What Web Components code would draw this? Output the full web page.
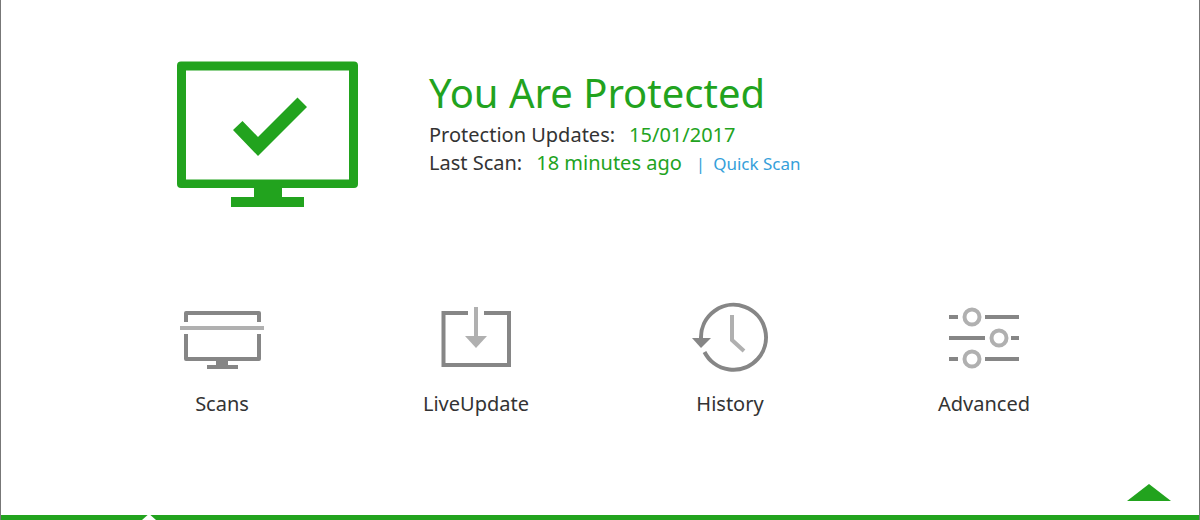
<!DOCTYPE html>
<html lang="en">
<head>
<meta charset="utf-8">
<title>Protection status</title>
<style>
  body {
    margin: 0;
    background: #fff;
    color: #333;
    font-family: "Noto Sans", "Open Sans", sans-serif;
    --green: #22a31e;
    --blue: #35a0da;
    --dark: #868686;
    --light: #b0b0b0;
  }
</style>
</head>
<body>
<security-app>
  <protection-status data-title="You Are Protected">
    <status-line data-label="Protection Updates:" data-value="15/01/2017"></status-line>
    <status-line data-label="Last Scan:" data-value="18 minutes ago">
      <a href="#quick-scan">Quick Scan</a>
    </status-line>
  </protection-status>
  <tile-bar>
    <nav-tile data-icon="scans" data-url="#scans">Scans</nav-tile>
    <nav-tile data-icon="update" data-url="#update">LiveUpdate</nav-tile>
    <nav-tile data-icon="history" data-url="#history">History</nav-tile>
    <nav-tile data-icon="advanced" data-url="#advanced">Advanced</nav-tile>
  </tile-bar>
  <drawer-bar slot="footer"></drawer-bar>
</security-app>

<script>
const ICONS = {
  scans: `
    <path class="dark" stroke-linejoin="round" d="M8 20V11H81V20" />
    <path class="dark" stroke-linejoin="round" d="M8 32V57H81V32" />
    <path class="light" d="M2 26H86" />
    <path class="dark-fill" d="M38 58H50V63H60V67H29V63H38Z" />`,
  update: `
    <path class="dark" d="M36 11H11.5V63H77V11H52" />
    <path class="light" d="M44 5V35" />
    <path class="light-fill" d="M33 34H55L44 46Z" />`,
  history: `
    <path class="dark" d="M15 36A32.5 32.5 0 1 1 18.500 50" />
    <path class="dark-fill" d="M6 36H25L15 46Z" />
    <path class="light" d="M46 13V38L58 49" />`,
  advanced: `
    <path class="dark" d="M9 15H18M45 15H79M9 36H45M71 36H79M9 57H18M45 57H79" />
    <circle class="light" cx="32" cy="15" r="7.5" />
    <circle class="light" cx="59" cy="36" r="7.5" />
    <circle class="light" cx="32" cy="57" r="7.5" />`
};

class SecurityApp extends HTMLElement {
  constructor() {
    super();
    const shadow = this.attachShadow({ mode: 'open' });
    shadow.innerHTML = `
      <style>
        :host {
          display: flex;
          flex-direction: column;
          box-sizing: border-box;
          min-height: 100vh;
          border: solid #777;
          border-width: 0 1px;
        }
        main {
          flex: 1;
        }
      </style>
      <main><slot></slot></main>
      <slot name="footer"></slot>
    `;
  }
}

class ProtectionStatus extends HTMLElement {
  constructor() {
    super();
    const shadow = this.attachShadow({ mode: 'open' });
    const title = this.getAttribute('data-title') || '';

    shadow.innerHTML = `
      <style>
        :host {
          display: flex;
          align-items: flex-start;
          gap: 70px;
          padding: 61px 32px 0 176px;
        }
        svg {
          flex: none;
          fill: var(--green);
        }
        h1 {
          margin: 4px 0 0;
          color: var(--green);
          font-size: 40px;
          font-weight: 400;
          line-height: 56px;
        }
      </style>
      <svg width="182" height="146" viewBox="0 0 182 146" aria-hidden="true">
        <path fill-rule="evenodd" d="M4 0.5H177Q181 0.5 181 4.5V123Q181 127 177 127H105V136H127V146H54V136H77V127H4Q0 127 0 123V4.5Q0 0.5 4 0.5ZM9 9.5V118.5H172V9.5Z" />
        <path d="M65.5 60L81 76L120.5 36.5L130 46L81 95L56 69Z" />
      </svg>
      <div>
        <h1>${title}</h1>
        <slot></slot>
      </div>
    `;
  }
}

class StatusLine extends HTMLElement {
  constructor() {
    super();
    const shadow = this.attachShadow({ mode: 'open' });
    const label = this.getAttribute('data-label') || '';
    const value = this.getAttribute('data-value') || '';

    shadow.innerHTML = `
      <style>
        :host {
          display: flex;
          align-items: baseline;
          gap: 14px;
          font-size: 20px;
          line-height: 28px;
        }
        .value {
          color: var(--green);
        }
        ::slotted(a) {
          color: var(--blue);
          font-size: 17px;
          text-decoration: none;
        }
        ::slotted(a)::before {
          content: "|";
          margin-right: 8px;
        }
      </style>
      <span>${label}</span>
      <span class="value">${value}</span>
      <slot></slot>
    `;
  }
}

class TileBar extends HTMLElement {
  constructor() {
    super();
    const shadow = this.attachShadow({ mode: 'open' });
    shadow.innerHTML = `
      <style>
        :host {
          display: block;
        }
        nav {
          display: grid;
          grid-template-columns: repeat(4, 1fr);
          padding: 95px 88px 32px 94px;
        }
      </style>
      <nav><slot></slot></nav>
    `;
  }
}

class NavTile extends HTMLElement {
  constructor() {
    super();
    const shadow = this.attachShadow({ mode: 'open' });
    const icon = this.getAttribute('data-icon');
    const url = this.getAttribute('data-url') || '#';

    shadow.innerHTML = `
      <style>
        :host {
          display: flex;
          justify-content: center;
        }
        a {
          display: flex;
          flex-direction: column;
          align-items: center;
          gap: 16px;
          color: inherit;
          font-size: 20px;
          line-height: 28px;
          text-decoration: none;
        }
        .dark, .light {
          fill: none;
          stroke: var(--dark);
          stroke-width: 4;
        }
        .light {
          stroke: var(--light);
        }
        .dark-fill {
          fill: var(--dark);
        }
        .light-fill {
          fill: var(--light);
        }
      </style>
      <a href="${url}">
        <svg width="88" height="72" viewBox="0 0 88 72" aria-hidden="true">${ICONS[icon]}</svg>
        <span><slot></slot></span>
      </a>
    `;
  }
}

class DrawerBar extends HTMLElement {
  constructor() {
    super();
    const shadow = this.attachShadow({ mode: 'open' });
    shadow.innerHTML = `
      <style>
        :host {
          display: flex;
          flex-direction: column;
        }
        button {
          align-self: flex-end;
          width: 44px;
          height: 18px;
          margin: 0 28px 14px 0;
          padding: 0;
          border: 0;
          background: none;
          cursor: pointer;
        }
        svg {
          display: block;
          fill: var(--green);
        }
        .bar {
          height: 5px;
          padding-left: 141px;
          background: var(--green);
        }
        .notch {
          width: 14px;
          height: 5px;
          background: #fff;
          clip-path: polygon(40% 0, 60% 0, 100% 100%, 0 100%);
        }
      </style>
      <button type="button" aria-label="Open drawer">
        <svg width="44" height="18" viewBox="0 0 44 18"><path d="M22 1L44 18H0Z" /></svg>
      </button>
      <div class="bar"><div class="notch"></div></div>
    `;
  }
}

customElements.define('security-app', SecurityApp);
customElements.define('protection-status', ProtectionStatus);
customElements.define('status-line', StatusLine);
customElements.define('tile-bar', TileBar);
customElements.define('nav-tile', NavTile);
customElements.define('drawer-bar', DrawerBar);
</script>
</body>
</html>
